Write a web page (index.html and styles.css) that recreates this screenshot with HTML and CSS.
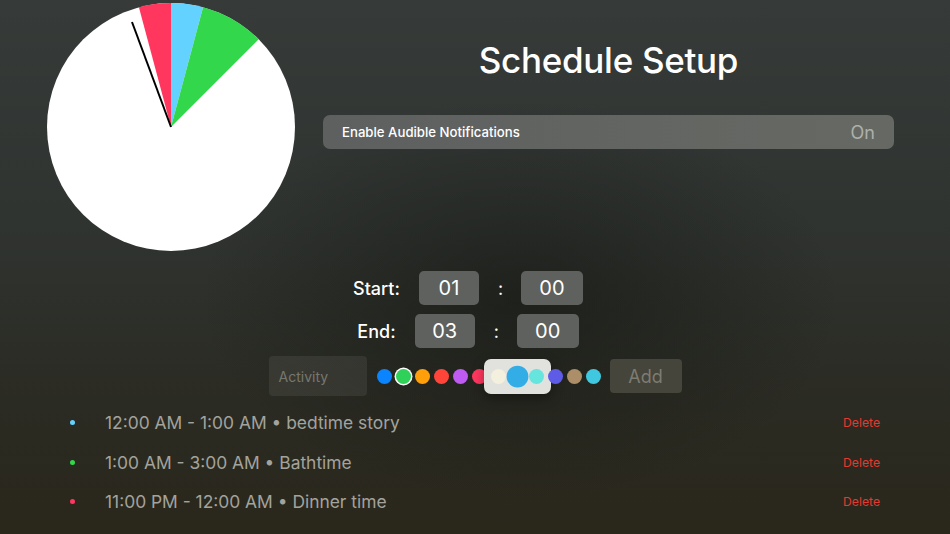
FILE: index.html
```html
<!DOCTYPE html>
<html lang="en">
<head>
    <meta charset="UTF-8">
    <meta name="viewport" content="width=device-width, initial-scale=1.0">
    <title>Schedule Setup</title>
    <link rel="stylesheet" href="styles.css">
</head>
<body>
    <div class="screen">
        <div class="top">
            <!-- 24 hour clock, midnight at the top -->
            <svg class="pie" viewBox="-124 -124 248 248" width="248" height="248">
                <circle cx="0" cy="0" r="124" fill="#ffffff"/>
                <path d="M0 0 L0 -124 A124 124 0 0 1 32.09 -119.78 Z" fill="#64d2ff"/>
                <path d="M0 0 L32.09 -119.78 A124 124 0 0 1 87.68 -87.68 Z" fill="#32d74b"/>
                <path d="M0 0 L-32.09 -119.78 A124 124 0 0 1 0 -124 Z" fill="#ff375f"/>
                <line x1="0" y1="0" x2="-39" y2="-105" stroke="#000000" stroke-width="2"/>
            </svg>

            <div class="setup">
                <h1 class="title">Schedule Setup</h1>
                <div class="toggle">
                    <span class="toggle-label">Enable Audible Notifications</span>
                    <span class="toggle-value">On</span>
                </div>
            </div>
        </div>

        <div class="times">
            <div class="time-row">
                <span class="time-label">Start:</span>
                <span class="time-box">01</span>
                <span class="colon">:</span>
                <span class="time-box wide">00</span>
            </div>
            <div class="time-row">
                <span class="time-label">End:</span>
                <span class="time-box">03</span>
                <span class="colon">:</span>
                <span class="time-box wide">00</span>
            </div>
        </div>

        <div class="add-row">
            <div class="activity-input">Activity</div>
            <div class="swatches">
                <span class="swatch" style="background:#0a84ff"></span>
                <span class="swatch selected" style="background:#30d158"></span>
                <span class="swatch" style="background:#ff9f0a"></span>
                <span class="swatch" style="background:#ff453a"></span>
                <span class="swatch" style="background:#bf5af2"></span>
                <span class="swatch" style="background:#ff375f"></span>
                <span class="focus-group">
                    <span class="swatch" style="background:#f4f0de"></span>
                    <span class="swatch focused" style="background:#32ade6"></span>
                    <span class="swatch" style="background:#66e4de"></span>
                </span>
                <span class="swatch" style="background:#5e5ce6"></span>
                <span class="swatch" style="background:#ac8e68"></span>
                <span class="swatch" style="background:#40c8e0"></span>
            </div>
            <div class="add-btn">Add</div>
        </div>

        <ul class="schedule">
            <li class="entry">
                <span class="entry-dot" style="background:#64d2ff"></span>
                <span class="entry-text">12:00 AM - 1:00 AM • bedtime story</span>
                <span class="delete">Delete</span>
            </li>
            <li class="entry">
                <span class="entry-dot" style="background:#32d74b"></span>
                <span class="entry-text">1:00 AM - 3:00 AM • Bathtime</span>
                <span class="delete">Delete</span>
            </li>
            <li class="entry">
                <span class="entry-dot" style="background:#ff375f"></span>
                <span class="entry-text">11:00 PM - 12:00 AM • Dinner time</span>
                <span class="delete">Delete</span>
            </li>
        </ul>
    </div>
</body>
</html>
```

FILE: styles.css
```css
* {
    margin: 0;
    padding: 0;
    box-sizing: border-box;
}

body {
    font-family: 'Inter', 'Noto Sans', sans-serif;
    color: #ffffff;
    background-color: #2e302b;
}

.screen {
    width: 950px;
    height: 534px;
    overflow: hidden;
    /* blurred tvOS backdrop */
    background:
        radial-gradient(ellipse 320px 200px at 520px 300px, rgba(18, 20, 16, 0.55), rgba(18, 20, 16, 0) 100%),
        linear-gradient(180deg, #363a38 0%, #303431 40%, #2b2c25 70%, #2a271b 100%);
}

/* Top: clock + settings */
.top {
    display: flex;
    padding: 3px 0 0 47px;
    height: 251px;
}

.pie {
    display: block;
    flex-shrink: 0;
}

.setup {
    margin-left: 28px;
    width: 571px;
}

.title {
    padding-top: 35px;
    font-size: 35px;
    line-height: 44px;
    font-weight: 500;
    text-align: center;
    letter-spacing: -0.3px;
}

.toggle {
    margin-top: 33px;
    height: 34px;
    border-radius: 7px;
    background: linear-gradient(90deg, #5d605f, #666963);
    display: flex;
    align-items: center;
    justify-content: space-between;
    padding: 0 19px;
}

.toggle-label {
    font-size: 13.2px;
    font-weight: 500;
}

.toggle-value {
    font-size: 18px;
    color: #aeb0ab;
}

/* Start / End */
.times {
    margin-top: 20px;
    padding-right: 14px;
    display: flex;
    flex-direction: column;
    align-items: center;
    gap: 9px;
}

.time-row {
    display: flex;
    align-items: center;
    gap: 19px;
}

.time-label {
    font-size: 18px;
    font-weight: 500;
}

.time-box {
    width: 60px;
    height: 34px;
    border-radius: 5px;
    background-color: #5e615e;
    display: flex;
    align-items: center;
    justify-content: center;
    font-size: 20px;
}

.time-box.wide {
    width: 62px;
}

.colon {
    font-size: 18px;
    width: 4px;
    text-align: center;
}

/* Activity + colours */
.add-row {
    margin-top: 8px;
    display: flex;
    align-items: center;
    justify-content: center;
}

.activity-input {
    width: 98px;
    height: 40px;
    border-radius: 4px;
    background-color: rgba(255, 255, 255, 0.07);
    color: #77776f;
    font-size: 14px;
    padding-left: 10px;
    display: flex;
    align-items: center;
}

.swatches {
    display: flex;
    align-items: center;
    gap: 4px;
    margin: 0 9px 0 10px;
}

.swatch {
    display: block;
    width: 15px;
    height: 15px;
    border-radius: 50%;
}

.swatch.selected {
    box-shadow: 0 0 0 1.5px #ffffff;
}

.focus-group {
    display: flex;
    align-items: center;
    gap: 4px;
    height: 35px;
    margin: 0 -7px;
    padding: 0 7px;
    border-radius: 7px;
    background-color: #e1e1de;
    box-shadow: 0 4px 12px rgba(0, 0, 0, 0.35);
}

.swatch.focused {
    transform: scale(1.45);
}

.add-btn {
    width: 72px;
    height: 34px;
    border-radius: 4px;
    background-color: #46453b;
    color: #7d7c72;
    font-size: 18px;
    display: flex;
    align-items: center;
    justify-content: center;
}

/* Schedule list */
.schedule {
    list-style: none;
    margin-top: 7px;
    padding: 0 70px;
}

.entry {
    height: 39.5px;
    display: flex;
    align-items: center;
}

.entry-dot {
    width: 5px;
    height: 5px;
    border-radius: 50%;
    margin-right: 30px;
}

.entry-text {
    flex: 1;
    font-size: 17.4px;
    color: #a3a39d;
}

.delete {
    font-size: 12.2px;
    color: #e23b30;
}
```
